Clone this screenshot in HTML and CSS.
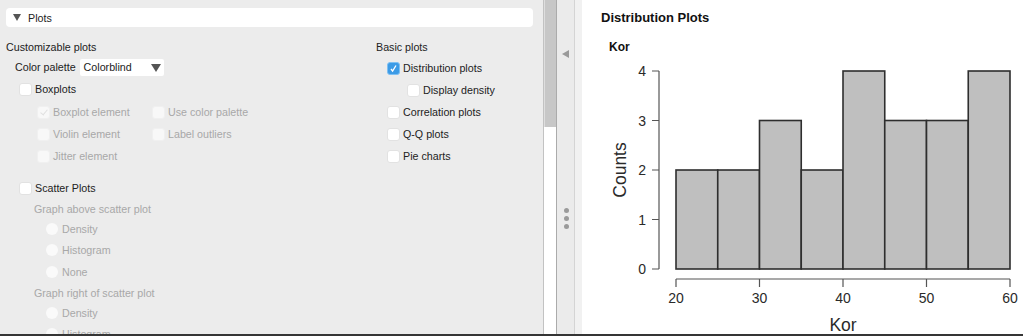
FILE: index.html
```html
<!DOCTYPE html>
<html>
<head>
<meta charset="utf-8">
<link rel="stylesheet" href="styles.css">
</head>
<body>
<div class="app">
  <div class="main">
    <div class="options">
      <div class="section-header"><span class="tri"></span>Plots</div>
      <div class="cols">
        <div class="col-left">
          <div class="row h20">Customizable plots</div>
          <div class="row h20 pl9">Color palette<div class="select">Colorblind<span class="caret"></span></div></div>
          <div class="row h24 pl13"><span class="cb"></span>Boxplots</div>
          <div class="subgrid">
            <div class="row h22 dis"><span class="cb dis checked-dis"></span>Boxplot element</div>
            <div class="row h22 dis"><span class="cb dis"></span>Use color palette</div>
            <div class="row h22 dis"><span class="cb dis"></span>Violin element</div>
            <div class="row h22 dis"><span class="cb dis"></span>Label outliers</div>
            <div class="row h22 dis"><span class="cb dis"></span>Jitter element</div>
            <div></div>
          </div>
          <div class="row h22 pl13 mt10"><span class="cb"></span>Scatter Plots</div>
          <div class="row h20 pl28 dis">Graph above scatter plot</div>
          <div class="row h20 pl40 dis"><span class="rb"></span>Density</div>
          <div class="row h22 pl40 dis"><span class="rb"></span>Histogram</div>
          <div class="row h22 pl40 dis"><span class="rb"></span>None</div>
          <div class="row h20 pl28 dis">Graph right of scatter plot</div>
          <div class="row h20 pl40 dis"><span class="rb"></span>Density</div>
          <div class="row h22 pl40 dis"><span class="rb"></span>Histogram</div>
        </div>
        <div class="col-right">
          <div class="row h20">Basic plots</div>
          <div class="row h22 pl11"><span class="cb checked"><svg width="9" height="9" viewBox="0 0 9 9"><path d="M2 5 L3.6 7 L7 1.5" fill="none" stroke="#fff" stroke-width="1.3"/></svg></span>Distribution plots</div>
          <div class="row h22 pl31"><span class="cb"></span>Display density</div>
          <div class="row h22 pl11"><span class="cb"></span>Correlation plots</div>
          <div class="row h22 pl11"><span class="cb"></span>Q-Q plots</div>
          <div class="row h22 pl11"><span class="cb"></span>Pie charts</div>
        </div>
      </div>
    </div>
    <div class="scrollbar"><div class="thumb"></div></div>
    <div class="splitter">
      <span class="arrow"></span>
      <span class="dots"><i></i><i></i><i></i></span>
    </div>
    <div class="edge"></div>
    <div class="results">
      <div class="res-title">Distribution Plots</div>
      <div class="res-sub">Kor</div>
      <svg class="plot" width="433" height="279" viewBox="0 0 433 279">
        <g fill="#bfbfbf" stroke="#2e2e2e" stroke-width="1.6">
          <rect x="86" y="115" width="41.75" height="99"/>
          <rect x="127.75" y="115" width="41.75" height="99"/>
          <rect x="169.5" y="65.5" width="41.75" height="148.5"/>
          <rect x="211.25" y="115" width="41.75" height="99"/>
          <rect x="253" y="16" width="41.75" height="198"/>
          <rect x="294.75" y="65.5" width="41.75" height="148.5"/>
          <rect x="336.5" y="65.5" width="41.75" height="148.5"/>
          <rect x="378.25" y="16" width="41.75" height="198"/>
        </g>
        <g stroke="#555" stroke-width="1.2" fill="none">
          <path d="M69 16 V214"/>
          <path d="M62 16 H69 M62 65.5 H69 M62 115 H69 M62 164.5 H69 M62 214 H69"/>
          <path d="M86 224 H420"/>
          <path d="M86 224 V232 M169.5 224 V232 M253 224 V232 M336.5 224 V232 M420 224 V232"/>
        </g>
        <g class="ticklab" text-anchor="end">
          <text x="56" y="21">4</text>
          <text x="56" y="70.5">3</text>
          <text x="56" y="120">2</text>
          <text x="56" y="169.5">1</text>
          <text x="56" y="219">0</text>
        </g>
        <g class="ticklab" text-anchor="middle">
          <text x="86" y="248">20</text>
          <text x="169.5" y="248">30</text>
          <text x="253" y="248">40</text>
          <text x="336.5" y="248">50</text>
          <text x="420" y="248">60</text>
        </g>
        <text class="axlab" x="253" y="276" text-anchor="middle">Kor</text>
        <text class="axlab" transform="translate(36,115) rotate(-90)" text-anchor="middle">Counts</text>
      </svg>
    </div>
  </div>
  <div class="bottombar"></div>
</div>
</body>
</html>
```

FILE: styles.css
```css
html, body {
  margin: 0;
  padding: 0;
  overflow: hidden;
  background: #ececec;
}
body {
  font-family: "Liberation Sans", Arial, sans-serif;
  font-size: 10.7px;
  color: #222;
}
.app {
  width: 1023px;
  height: 336px;
  display: flex;
  flex-direction: column;
}
.main {
  height: 334px;
  display: flex;
  overflow: hidden;
}
.bottombar {
  height: 2px;
  background: #353535;
}
.options {
  width: 543px;
  flex: none;
  box-sizing: border-box;
  padding: 8px 10px 0 6px;
  background: #ececec;
  overflow: hidden;
}
.section-header {
  height: 19px;
  background: #fff;
  border-radius: 4px;
  display: flex;
  align-items: center;
  padding-left: 7px;
  font-size: 10.7px;
}
.tri {
  width: 0;
  height: 0;
  border-left: 4px solid transparent;
  border-right: 4px solid transparent;
  border-top: 7px solid #555;
  margin-right: 7px;
}
.cols {
  margin-top: 10px;
  display: grid;
  grid-template-columns: 370px 1fr;
}
.row {
  display: flex;
  align-items: center;
  white-space: nowrap;
}
.h20 { height: 20px; }
.h22 { height: 22px; }
.h24 { height: 24px; }
.pl9 { padding-left: 9px; }
.pl11 { padding-left: 11px; }
.pl13 { padding-left: 13px; }
.pl28 { padding-left: 28px; }
.pl31 { padding-left: 31px; }
.pl40 { padding-left: 40px; }
.mt10 { margin-top: 10px; }
.dis { color: #a8a8a8; }
.subgrid {
  display: grid;
  grid-template-columns: 115px 1fr;
  padding-left: 31px;
}
.select {
  margin-left: 4px;
  width: 84px;
  height: 17px;
  box-sizing: border-box;
  background: #fff;
  border-radius: 2px;
  display: flex;
  align-items: center;
  padding-left: 4px;
  position: relative;
}
.caret {
  position: absolute;
  right: 3px;
  top: 5px;
  width: 0;
  height: 0;
  border-left: 5px solid transparent;
  border-right: 5px solid transparent;
  border-top: 8px solid #555;
}
.cb {
  width: 13px;
  height: 13px;
  box-sizing: border-box;
  background: #fff;
  border: 1px solid #e2e2e2;
  border-radius: 3px;
  margin-right: 3px;
  flex: none;
  display: flex;
  align-items: center;
  justify-content: center;
}
.cb.dis {
  background: #f8f8f8;
  border-color: #f0f0f0;
}
.cb.checked-dis {
  position: relative;
}
.cb.checked-dis::after {
  content: "";
  width: 3px;
  height: 6px;
  border-right: 1.5px solid #e0e0e0;
  border-bottom: 1.5px solid #e0e0e0;
  transform: rotate(40deg);
  margin-top: -2px;
}
.cb.checked {
  background: #3c9be6;
  border: 1px solid #7ec0f3;
}
.rb {
  width: 12px;
  height: 12px;
  border-radius: 50%;
  background: #fafafa;
  margin-right: 4px;
  flex: none;
}
.scrollbar {
  width: 14px;
  flex: none;
  box-sizing: border-box;
  border-left: 1px solid #c2c2c2;
  border-right: 1px solid #ababab;
  background: #fff;
}
.thumb {
  height: 127px;
  background: #c7c7c7;
  border-left: 1px solid #dedede;
}
.splitter {
  width: 18px;
  flex: none;
  box-sizing: border-box;
  background: #ebebeb;
  border-right: 1px solid #d4d4d4;
  display: flex;
  flex-direction: column;
  align-items: center;
}
.arrow {
  margin-top: 50px;
  width: 0;
  height: 0;
  border-top: 4px solid transparent;
  border-bottom: 4px solid transparent;
  border-right: 7px solid #9a9a9a;
}
.dots {
  margin-top: 150px;
  display: flex;
  flex-direction: column;
  gap: 3px;
  margin-left: 2px;
}
.dots i {
  display: block;
  width: 5px;
  height: 5px;
  border-radius: 50%;
  background: #9a9a9a;
}
.edge {
  width: 7px;
  flex: none;
  background: #f1f1f1;
}
.results {
  flex: 1;
  background: #fff;
  padding: 10px 0 0 19px;
  overflow: hidden;
}
.res-title {
  font-weight: bold;
  font-size: 13px;
  line-height: 16px;
  color: #111;
}
.res-sub {
  margin-top: 13px;
  margin-left: 8px;
  font-weight: bold;
  font-size: 12px;
  line-height: 16px;
  color: #111;
}
.plot {
  display: block;
  margin-left: -11px;
}
.ticklab {
  font-family: "Liberation Sans", Arial, sans-serif;
  font-size: 14px;
  fill: #2a2a2a;
}
.axlab {
  font-family: "Liberation Sans", Arial, sans-serif;
  font-size: 17.5px;
  fill: #2a2a2a;
}
```
